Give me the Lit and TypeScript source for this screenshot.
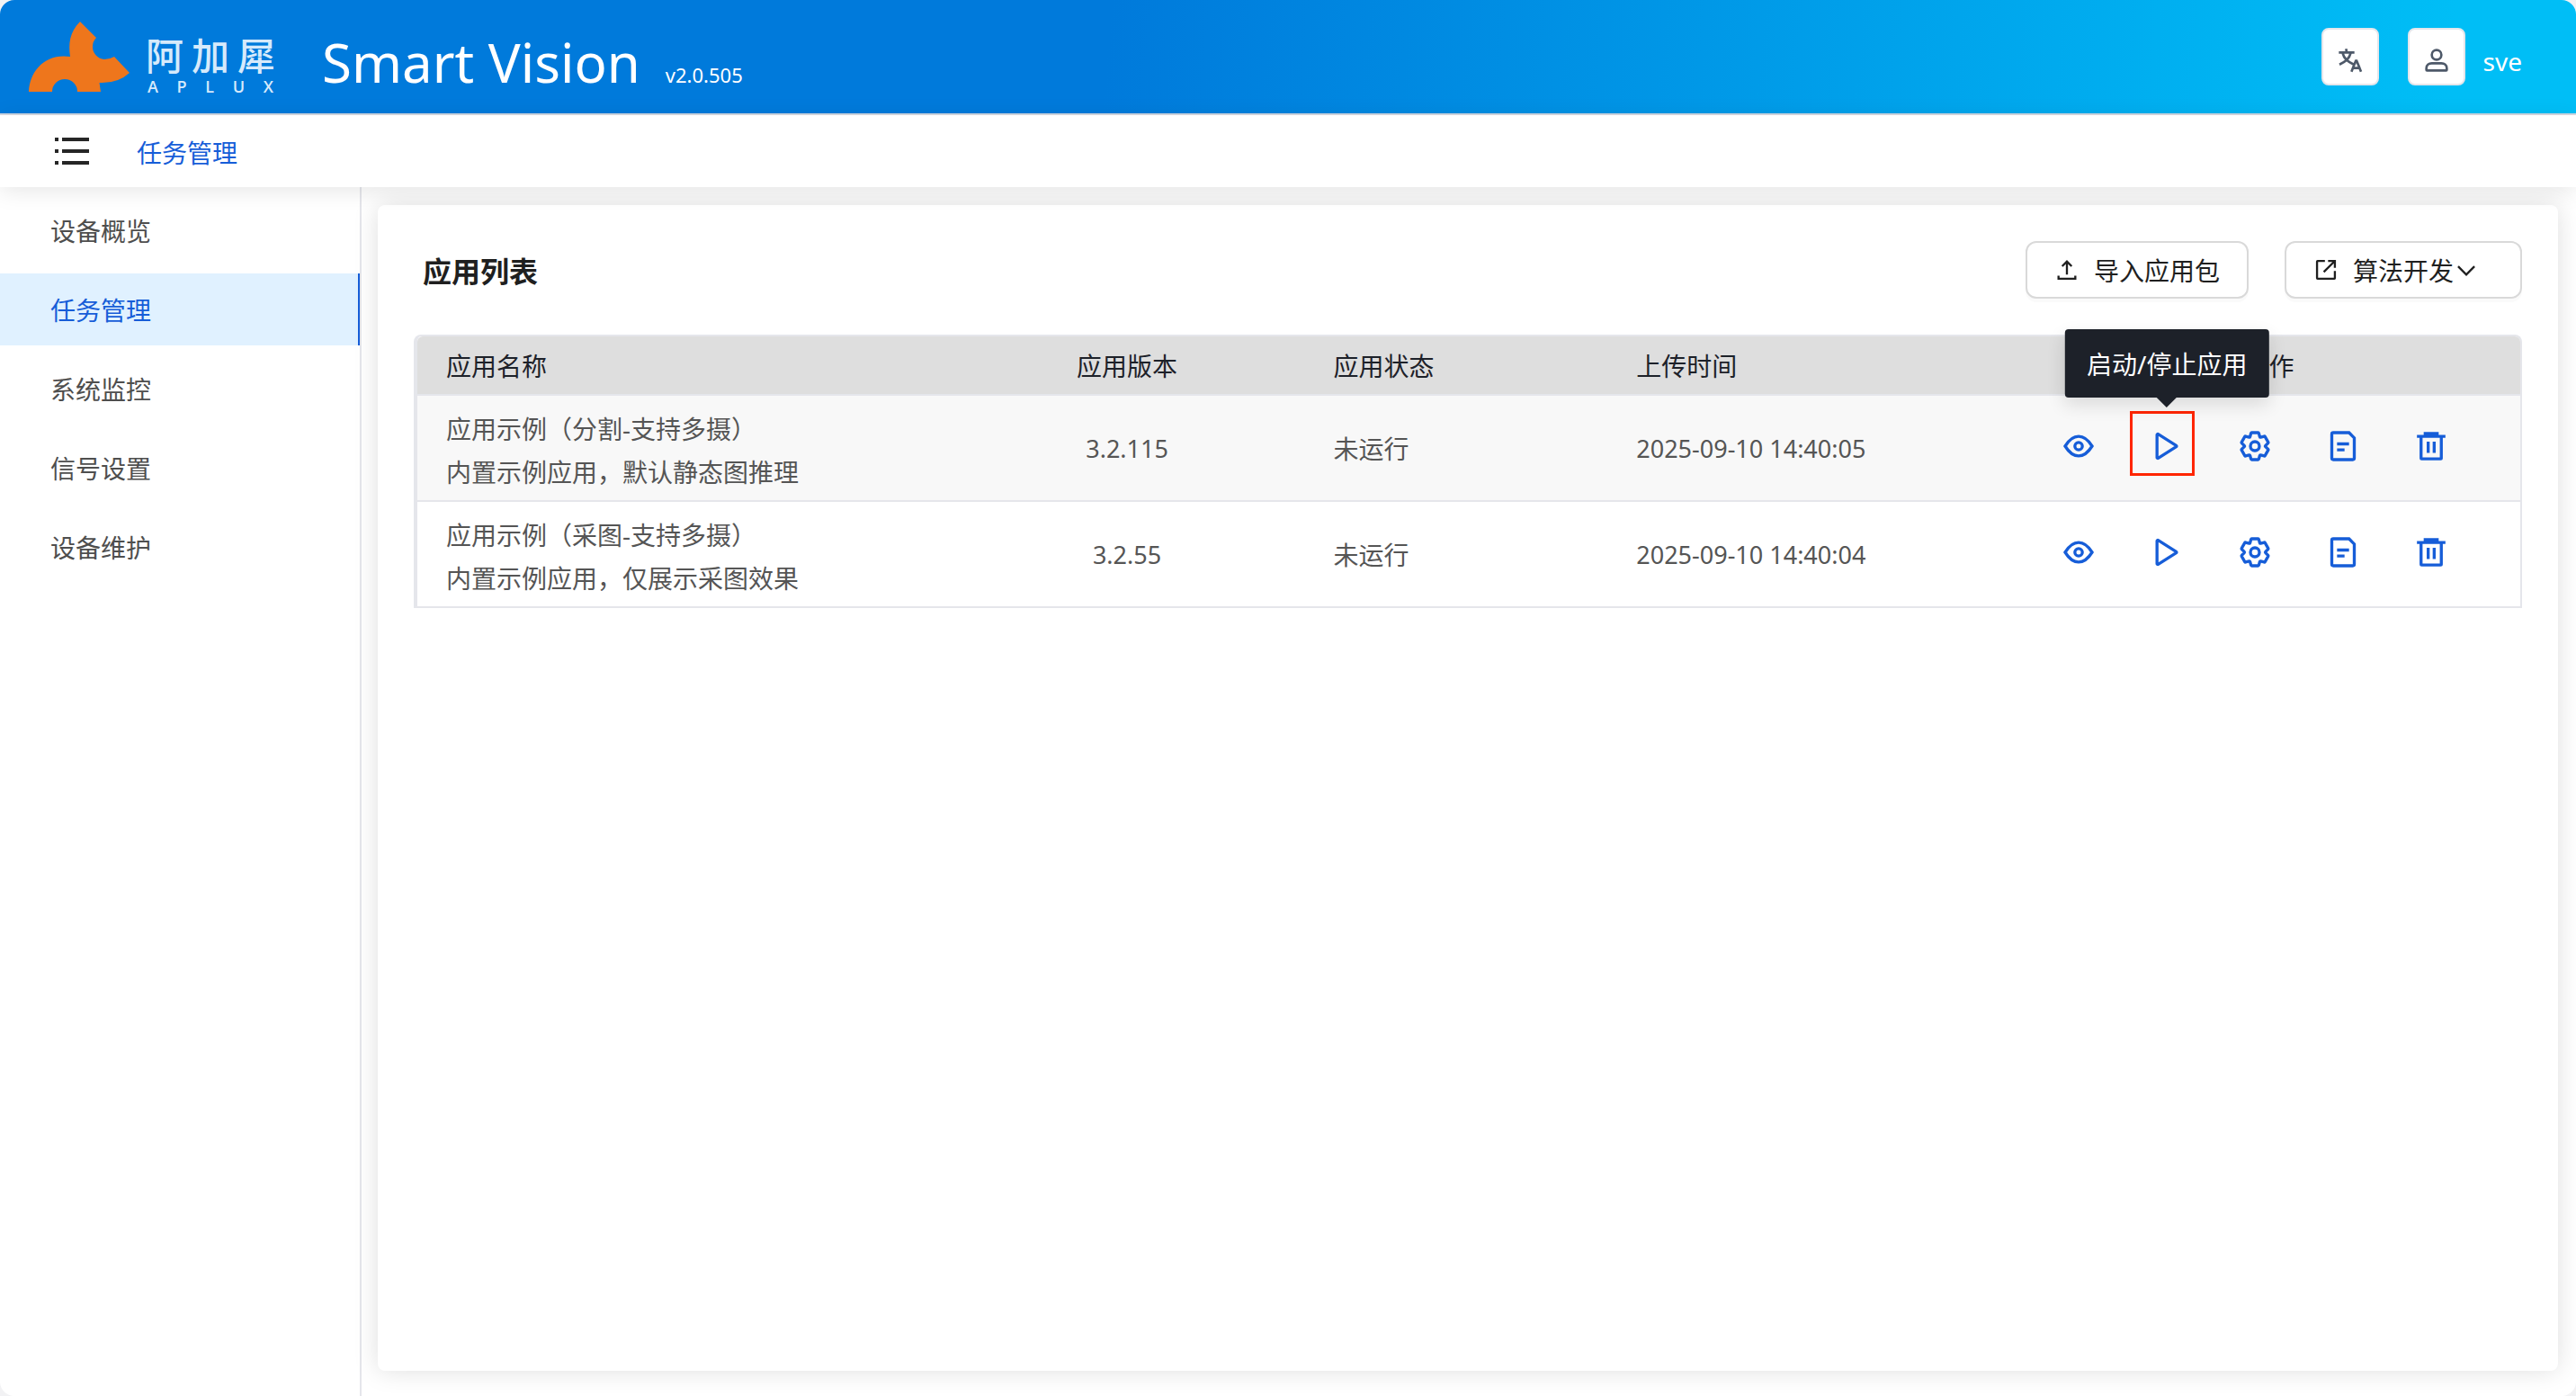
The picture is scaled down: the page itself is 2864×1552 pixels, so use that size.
import { LitElement, html, svg, css, type TemplateResult } from "lit";
import { customElement, property, state } from "lit/decorators.js";
import { classMap } from "lit/directives/class-map.js";

type IconName =
  | "menu" | "language" | "user" | "upload" | "launch" | "down"
  | "eye" | "play" | "settings" | "file" | "delete";

const ICONS: Record<IconName, TemplateResult> = {
  menu: svg`<path d="M13 24h30M5 11h4m4 0h30M13 37h30M5 24h4M5 37h4" />`,
  language: svg`<path d="m42 43-2.385-6M26 43l2.384-6m11.231 0-.795-2-4.18-10h-1.28l-4.181 10-.795 2m11.231 0h-11.23M17 5l1 5M5 11h26M11 11s1.889 7.826 6.611 12.174C22.333 27.522 30 31 30 31" /><path d="M25 11s-1.889 7.826-6.611 12.174C13.667 27.522 6 31 6 31" />`,
  user: svg`<path d="M7 37c0-4.97 4.03-8 9-8h16c4.97 0 9 3.03 9 8v3a1 1 0 0 1-1 1H8a1 1 0 0 1-1-1v-3Z" /><circle cx="24" cy="15" r="8" />`,
  upload: svg`<path d="M14.93 17.071 24 8l9.071 9.071M24 33.142v-25M40 35v6H8v-6" />`,
  launch: svg`<path d="M41 26v14a1 1 0 0 1-1 1H8a1 1 0 0 1-1-1V8a1 1 0 0 1 1-1h14M19.822 28.178 39.899 8.1M41 20V7H28" />`,
  down: svg`<path d="M39.6 17.443 24.043 33 8.487 17.443" />`,
  eye: svg`<path d="M24 37c6.627 0 12.627-4.333 18-13-5.373-8.667-11.373-13-18-13-6.627 0-12.627 4.333-18 13 5.373 8.667 11.373 13 18 13Z" /><circle cx="24" cy="24" r="5" />`,
  play: svg`<path d="M12.533 7.965A1 1 0 0 0 11 8.81v30.377a1 1 0 0 0 1.533.846L36.656 24.84a1 1 0 0 0 0-1.692L12.533 7.965Z" />`,
  settings: svg`<path d="M18.797 6.732A1 1 0 0 1 19.76 6h8.48a1 1 0 0 1 .964.732l1.285 4.628a1 1 0 0 0 1.213.7l4.651-1.2a1 1 0 0 1 1.116.468l4.24 7.344a1 1 0 0 1-.153 1.2L38.193 23.3a1 1 0 0 0 0 1.402l3.364 3.427a1 1 0 0 1 .153 1.2l-4.24 7.344a1 1 0 0 1-1.116.468l-4.65-1.2a1 1 0 0 0-1.214.7l-1.285 4.628a1 1 0 0 1-.964.732h-8.48a1 1 0 0 1-.963-.732L17.51 36.64a1 1 0 0 0-1.213-.7l-4.65 1.2a1 1 0 0 1-1.116-.468l-4.24-7.344a1 1 0 0 1 .153-1.2L9.809 24.7a1 1 0 0 0 0-1.402l-3.364-3.427a1 1 0 0 1-.153-1.2l4.24-7.344a1 1 0 0 1 1.116-.468l4.65 1.2a1 1 0 0 0 1.213-.7l1.286-4.628Z" /><circle cx="24" cy="24" r="6" />`,
  file: svg`<path d="M16 21h16m-16 8h10m11 13H11a2 2 0 0 1-2-2V8a2 2 0 0 1 2-2h21l7 7v27a2 2 0 0 1-2 2Z" />`,
  delete: svg`<path d="M5 11h5.5m0 0v29a1 1 0 0 0 1 1h25a1 1 0 0 0 1-1V11m-27 0H16m21.5 0H43m-5.5 0H32m-16 0V7h16v4m-16 0h16M20 18v15m8-15v15" /><path d="M16 9h16" />`,
};

@customElement("line-icon")
export class LineIcon extends LitElement {
  @property() name: IconName = "eye";

  static styles = css`
    :host {
      display: inline-flex;
      flex: none;
      width: var(--icon-size, 40px);
      height: var(--icon-size, 40px);
    }
    .icon {
      width: 100%;
      height: 100%;
      fill: none;
      stroke: currentColor;
      stroke-width: 4;
    }
  `;

  render() {
    return html`<svg class="icon" viewBox="0 0 48 48" aria-hidden="true">${ICONS[this.name]}</svg>`;
  }
}

@customElement("brand-logo")
export class BrandLogo extends LitElement {
  static styles = css`
    :host {
      display: flex;
      align-items: flex-end;
      gap: 18px;
      color: #d6eafb;
    }
    .mark {
      width: 112px;
      height: 78px;
      fill: #ee761c;
    }
    .words {
      display: flex;
      flex-direction: column;
      width: 144px;
    }
    .cn,
    .en {
      display: flex;
      justify-content: space-between;
    }
    .cn {
      font-family: "Noto Sans CJK SC", sans-serif;
      font-size: 42px;
      line-height: 60px;
      font-weight: 500;
    }
    .en {
      padding: 0 2px;
      font-family: "Open Sans", sans-serif;
      font-size: 18px;
      line-height: 12px;
      font-weight: 600;
    }
  `;

  render() {
    return html`
      <svg class="mark" viewBox="32 23 112 78" aria-hidden="true">
        <path d="M89 23 107 41Q103 45 103 51A14 14 0 0 0 116 65Q122 65 127 62L144 80Q131 92 110.500 91L112 101H86A14 14 0 0 0 58 101H32C33 78 50 58 78 62C76 48 77 35 89 23Z" />
      </svg>
      <div class="words">
        <div class="cn"><span>阿</span><span>加</span><span>犀</span></div>
        <div class="en"><span>A</span><span>P</span><span>L</span><span>U</span><span>X</span></div>
      </div>
    `;
  }
}

interface AppRow {
  name: string;
  description: string;
  version: string;
  status: string;
  uploaded: string;
}

const ROWS: AppRow[] = [
  {
    name: "应用示例（分割-支持多摄）",
    description: "内置示例应用，默认静态图推理",
    version: "3.2.115",
    status: "未运行",
    uploaded: "2025-09-10 14:40:05",
  },
  {
    name: "应用示例（采图-支持多摄）",
    description: "内置示例应用，仅展示采图效果",
    version: "3.2.55",
    status: "未运行",
    uploaded: "2025-09-10 14:40:04",
  },
];

const ACTIONS: { icon: IconName; label: string }[] = [
  { icon: "eye", label: "查看" },
  { icon: "play", label: "启动/停止应用" },
  { icon: "settings", label: "设置" },
  { icon: "file", label: "日志" },
  { icon: "delete", label: "删除" },
];

@customElement("app-table")
export class AppTable extends LitElement {
  @state() private hintRow = 0;

  static styles = css`
    :host {
      display: block;
    }
    .frame {
      border: 2px solid #e5e6eb;
      border-left-width: 4px;
      border-bottom: 0;
      border-radius: 8px 8px 0 0;
    }
    .table {
      width: 100%;
      table-layout: fixed;
      border-collapse: separate;
      border-spacing: 0;
      font-size: 28px;
      line-height: 48px;
      color: #555;
    }
    .c-name { width: 25.3%; }
    .c-version { width: 16.9%; }
    .c-status { width: 14.4%; }
    .c-time { width: 19.5%; }
    .c-action { width: 23.9%; }
    th,
    td {
      padding: 9px 32px 7px;
      border-bottom: 2px solid #e5e6eb;
      text-align: left;
      font-weight: 400;
    }
    th {
      background: #dedede;
      color: #1d2129;
    }
    th:first-child { border-top-left-radius: 6px; }
    th:last-child { border-top-right-radius: 6px; }
    td {
      padding-top: 11px;
      padding-bottom: 9px;
    }
    td.name {
      padding-top: 13px;
      padding-bottom: 7px;
    }
    .striped td {
      background: #f8f8f8;
    }
    .center {
      text-align: center;
    }
    .latin {
      font-size: 27px;
    }
    td.actions-cell {
      padding: 0 38px 4px;
    }
    .actions {
      display: flex;
      gap: 38px;
    }
    .action {
      position: relative;
      display: flex;
      justify-content: center;
      align-items: center;
      width: 60px;
      height: 60px;
      padding: 0;
      border: 0;
      background: none;
      color: #165dd8;
      cursor: pointer;
      font: inherit;
    }
    .mark {
      position: absolute;
      left: -11px;
      top: -9px;
      width: 66px;
      height: 66px;
      border: 3px solid #ff2600;
    }
    .tip {
      position: absolute;
      left: 50%;
      bottom: 84px;
      transform: translateX(-50%);
      padding: 15px 24px 13px;
      border-radius: 4px;
      background: #1d2129;
      box-shadow: 0 8px 20px rgba(0, 0, 0, 0.12);
      color: #fff;
      white-space: nowrap;
    }
    .tip::after {
      content: "";
      position: absolute;
      left: 50%;
      top: 100%;
      margin-left: -11px;
      border: 11px solid transparent;
      border-top-color: #1d2129;
      border-bottom: 0;
    }
  `;

  render() {
    return html`
      <div class="frame">
        <table class="table">
          <colgroup>
            <col class="c-name" />
            <col class="c-version" />
            <col class="c-status" />
            <col class="c-time" />
            <col class="c-action" />
          </colgroup>
          <thead>
            <tr>
              <th>应用名称</th>
              <th class="center">应用版本</th>
              <th>应用状态</th>
              <th>上传时间</th>
              <th class="center">操作</th>
            </tr>
          </thead>
          <tbody>
            ${ROWS.map(
              (row, index) => html`
                <tr class=${classMap({ striped: index % 2 === 0 })}>
                  <td class="name">${row.name}<br />${row.description}</td>
                  <td class="center latin">${row.version}</td>
                  <td>${row.status}</td>
                  <td class="latin">${row.uploaded}</td>
                  <td class="actions-cell">
                    <div class="actions">
                      ${ACTIONS.map((action) => this.renderAction(action, index))}
                    </div>
                  </td>
                </tr>
              `,
            )}
          </tbody>
        </table>
      </div>
    `;
  }

  private renderAction(action: { icon: IconName; label: string }, row: number) {
    const hinted = action.icon === "play" && row === this.hintRow;
    return html`
      <button class="action" type="button" aria-label=${action.label}>
        <line-icon name=${action.icon}></line-icon>
        ${hinted ? html`<span class="mark"></span><span class="tip" role="tooltip">${action.label}</span>` : ""}
      </button>
    `;
  }
}

const NAV = ["设备概览", "任务管理", "系统监控", "信号设置", "设备维护"];

@customElement("app-root")
export class AppRoot extends LitElement {
  @state() private current = "任务管理";

  static styles = css`
    :host {
      display: block;
      background: #f2f2f4;
      font-family: "Noto Sans", "Noto Sans CJK SC", sans-serif;
      font-size: 28px;
      line-height: 48px;
      color: #1f1f1f;
    }
    .page {
      display: flex;
      flex-direction: column;
      min-height: 100vh;
      overflow: hidden;
      border-radius: 16px;
      background: #fff;
    }
    .header {
      display: flex;
      align-items: center;
      height: 126px;
      padding: 0 60px 0 32px;
      border-bottom: 2px solid #d5d9e2;
      background: linear-gradient(95deg, #007adb 43%, #00bef6 95%);
      color: #fff;
    }
    .logo {
      margin-right: 52px;
    }
    .titles {
      display: flex;
      flex: 1;
      align-items: baseline;
      gap: 28px;
      padding-top: 14px;
    }
    .title {
      margin: 0;
      font-family: "Noto Sans", sans-serif;
      font-size: 60px;
      line-height: 72px;
      font-weight: 400;
    }
    .version {
      font-size: 22px;
    }
    .tools {
      display: flex;
      align-items: center;
      gap: 32px;
    }
    .tool {
      display: flex;
      justify-content: center;
      align-items: center;
      width: 64px;
      height: 64px;
      padding: 8px 0 0;
      border: 2px solid #e5e6eb;
      border-radius: 8px;
      background: #fff;
      color: #4e5969;
      --icon-size: 32px;
    }
    .account {
      display: flex;
      align-items: center;
      gap: 20px;
    }
    .user {
      padding-top: 10px;
    }
    .bar {
      position: relative;
      display: flex;
      align-items: center;
      gap: 48px;
      height: 80px;
      padding: 0 56px;
      background: #fff;
      box-shadow: 0 4px 24px rgba(0, 0, 0, 0.1);
    }
    .menu {
      display: flex;
      padding: 0;
      border: 0;
      background: none;
      color: #262626;
      --icon-size: 48px;
    }
    .crumb {
      padding-top: 4px;
      color: #165dd8;
      text-decoration: none;
    }
    .body {
      display: flex;
      flex: 1;
    }
    .nav {
      display: flex;
      flex-direction: column;
      gap: 8px;
      box-sizing: border-box;
      width: 402px;
      padding-top: 8px;
      border-right: 2px solid #e5e6eb;
    }
    .nav-item {
      padding: 17px 56px 15px;
      color: #4e4e4e;
      text-decoration: none;
    }
    .nav-item.active {
      border-right: 2px solid #165dd8;
      background: #e0f1ff;
      color: #165dd8;
    }
    .main {
      display: flex;
      flex: 1;
      padding: 20px 20px 28px 18px;
    }
    .card {
      flex: 1;
      padding: 40px;
      border-radius: 8px;
      background: #fff;
      box-shadow: 0 0 28px rgba(0, 0, 0, 0.13);
    }
    .card-head {
      display: flex;
      align-items: center;
      gap: 40px;
      margin-bottom: 40px;
    }
    .heading {
      flex: 1;
      margin: 0;
      padding: 4px 10px 0;
      font-size: 32px;
      line-height: 48px;
      font-weight: 700;
    }
    .btn {
      display: flex;
      align-items: center;
      height: 64px;
      padding: 0 30px;
      border: 2px solid #d9d9d9;
      border-radius: 12px;
      background: #fff;
      box-shadow: 0 4px 0 rgba(0, 0, 0, 0.02);
      color: #1f1f1f;
      font: inherit;
      --icon-size: 28px;
    }
    .btn-label {
      padding: 2px 0 0 16px;
    }
    .btn.wide {
      padding-right: 46px;
    }
  `;

  render() {
    return html`
      <div class="page">
        <header class="header">
          <brand-logo class="logo"></brand-logo>
          <div class="titles">
            <h1 class="title">Smart Vision</h1>
            <span class="version">v2.0.505</span>
          </div>
          <div class="tools">
            <button class="tool" type="button" aria-label="语言">
              <line-icon name="language"></line-icon>
            </button>
            <div class="account">
              <button class="tool" type="button" aria-label="用户">
                <line-icon name="user"></line-icon>
              </button>
              <span class="user">sve</span>
            </div>
          </div>
        </header>
        <div class="bar">
          <button class="menu" type="button" aria-label="菜单">
            <line-icon name="menu"></line-icon>
          </button>
          <a class="crumb" href="#">${this.current}</a>
        </div>
        <div class="body">
          <nav class="nav">
            ${NAV.map(
              (label) => html`
                <a
                  class=${classMap({ "nav-item": true, active: label === this.current })}
                  href="#"
                  @click=${() => (this.current = label)}
                >${label}</a>
              `,
            )}
          </nav>
          <main class="main">
            <section class="card">
              <div class="card-head">
                <h2 class="heading">应用列表</h2>
                <button class="btn" type="button">
                  <line-icon name="upload"></line-icon>
                  <span class="btn-label">导入应用包</span>
                </button>
                <button class="btn wide" type="button">
                  <line-icon name="launch"></line-icon>
                  <span class="btn-label">算法开发</span>
                  <line-icon name="down"></line-icon>
                </button>
              </div>
              <app-table></app-table>
            </section>
          </main>
        </div>
      </div>
    `;
  }
}
